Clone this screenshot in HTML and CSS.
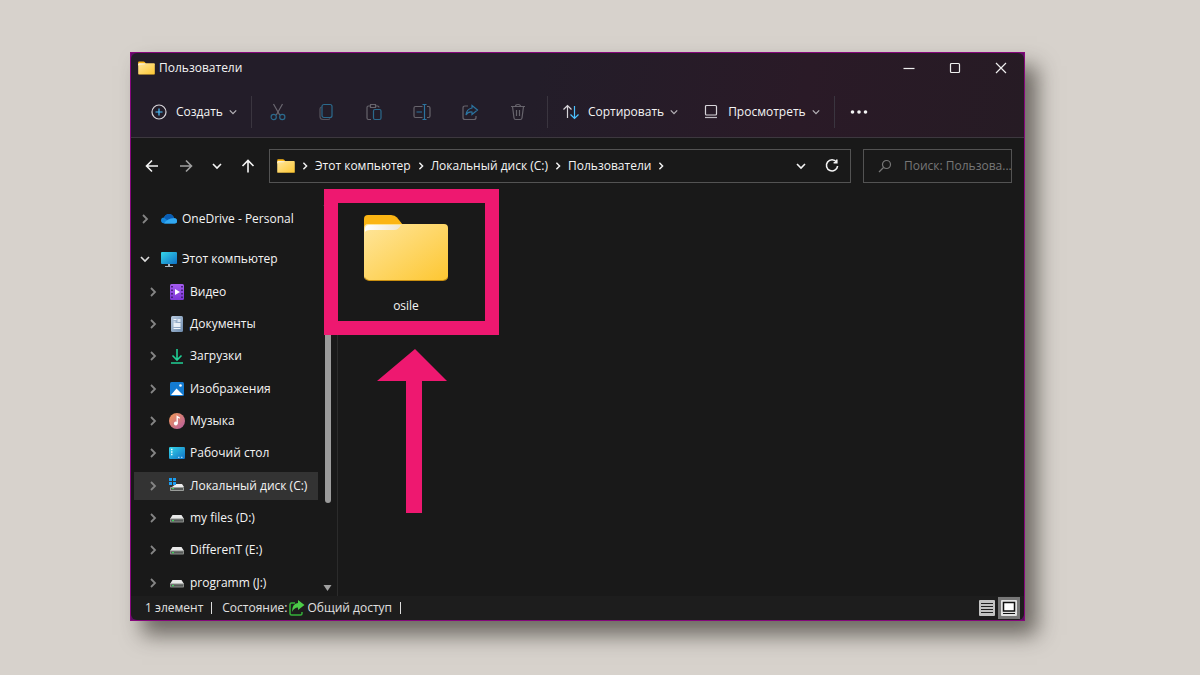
FILE: index.html
```html
<!DOCTYPE html>
<html lang="ru">
<head>
<meta charset="utf-8">
<meta name="viewport" content="width=device-width, initial-scale=1">
<title>Пользователи</title>
<link rel="stylesheet" href="styles.css">
</head>
<body>
<svg class="defs" aria-hidden="true">
  <defs>
    <linearGradient id="g-folder" x1="0" y1="0" x2="1" y2="1"><stop offset="0" stop-color="#ffe69c"/><stop offset="1" stop-color="#fdc732"/></linearGradient>
    <linearGradient id="g-shine" x1="0" y1="0" x2="1" y2="0"><stop offset="0" stop-color="#fff"/><stop offset="1" stop-color="#efe6d0"/></linearGradient>
    <linearGradient id="g-screen" x1="0" y1="0" x2="1" y2="1"><stop offset="0" stop-color="#35d6e8"/><stop offset="1" stop-color="#0f6fc4"/></linearGradient>
    <linearGradient id="g-doc" x1="0" y1="0" x2="1" y2="1"><stop offset="0" stop-color="#b9cbe0"/><stop offset="1" stop-color="#6d8bad"/></linearGradient>
    <linearGradient id="g-music" x1="0" y1="0" x2="1" y2="1"><stop offset="0" stop-color="#f39a55"/><stop offset="1" stop-color="#b45aa0"/></linearGradient>
    <linearGradient id="g-video" x1="0" y1="0" x2="0" y2="1"><stop offset="0" stop-color="#a55cf0"/><stop offset="1" stop-color="#7c35d6"/></linearGradient>
  </defs>
  <symbol id="chev-r" viewBox="0 0 10 10"><path d="M3 1l4 4-4 4" fill="none" stroke="currentColor" stroke-width="1.8"/></symbol>
  <symbol id="chev-d" viewBox="0 0 10 10"><path d="M1 3l4 4 4-4" fill="none" stroke="currentColor" stroke-width="1.6"/></symbol>
  <symbol id="folder" viewBox="0 0 86 67"><path d="M1 5q0-4 4-4h23q4 0 6 2.500l6 7.500v12H1z" fill="#fbb514"/><path d="M1 15q0-5 4-5h76q4 0 4 4v48q0 4-4 4H5q-4 0-4-4z" fill="url(#g-folder)"/><path d="M2 18v-3q0-4 4-4h32q-2.500 5-7 5H7q-4 0-5 2z" fill="url(#g-shine)"/><path d="M2 63.500q1 3 4 3h74q4 0 4.500-3" fill="none" stroke="#c98f10"/></symbol>
  <symbol id="drive" viewBox="0 0 16 16"><path d="M3.500 5h9l2.500 4H1z" fill="#e9e9e9"/><rect x="1" y="8.500" width="14" height="4" rx=".8" fill="#8a8d8a"/><rect x="2" y="9.500" width="12" height="2" fill="#565a58"/><rect x="3" y="10" width="2" height="1.200" fill="#3fd05a"/></symbol>
</svg>

<main class="window">
  <header class="chrome">
    <div class="titlebar">
      <svg class="i-title"><use href="#folder"/></svg>
      <h1 class="title">Пользователи</h1>
      <div class="captions">
        <button class="caption" aria-label="Свернуть"><svg viewBox="0 0 12 12"><path d="M.5 6.500h11"/></svg></button>
        <button class="caption" aria-label="Развернуть"><svg viewBox="0 0 12 12"><rect x="1.500" y="1.500" width="9" height="9" rx="1"/></svg></button>
        <button class="caption" aria-label="Закрыть"><svg viewBox="0 0 12 12"><path d="M1 1l10 10M11 1L1 11"/></svg></button>
      </div>
    </div>
    <div class="toolbar">
      <button class="tool tool-new">
        <svg viewBox="0 0 18 18"><circle cx="9" cy="9" r="7" stroke="#d8d5da"/><path d="M9 5.500v7M5.500 9h7" stroke="#4cc2ff"/></svg>
        Создать <svg class="chev"><use href="#chev-d"/></svg>
      </button>
      <span class="sep"></span>
      <div class="actions">
        <button class="act" aria-label="Вырезать"><svg viewBox="0 0 18 18"><path d="M4.500 1l6.200 11M13.500 1L7.300 12" stroke="#6a6770"/><g stroke="#2b6a8d"><circle cx="4.700" cy="14" r="2.600"/><circle cx="13.300" cy="14" r="2.600"/></g></svg></button>
        <button class="act" aria-label="Копировать"><svg viewBox="0 0 18 18"><path d="M4.500 4Q3 4.500 3 6v7.500Q3 16.500 6 16.500h5q1.500 0 2-1" stroke="#56535c"/><rect x="5" y="1.500" width="10" height="13" rx="2" stroke="#2b6a8d"/></svg></button>
        <button class="act" aria-label="Вставить"><svg viewBox="0 0 18 18"><path d="M6 16.500H3.500Q2 16.500 2 15V4.500Q2 3 3.500 3H5m6 0h1.500Q14 3 14 4.500M5.500 1.500h5v3h-5z" stroke="#67646c"/><rect x="8.500" y="6.500" width="7.500" height="10" rx="1.500" stroke="#2b6a8d"/></svg></button>
        <button class="act" aria-label="Переименовать"><svg viewBox="0 0 18 18"><path d="M9.500 3.500h-7Q1 3.500 1 5v8q0 1.500 1.500 1.500h7M14 3.500h1.500Q17 3.500 17 5v8q0 1.500-1.500 1.500H14" stroke="#67646c"/><path d="M9.500 1.500h4M9.500 16.500h4M11.500 1.500v15M3.500 9H9" stroke="#2b74a0"/></svg></button>
        <button class="act" aria-label="Поделиться"><svg viewBox="0 0 18 18"><path d="M7 3H4Q2 3 2 5v9.500q0 2 2 2h9q2 0 2-2V13" stroke="#67646c"/><path d="M11 2.500l5.500 4.500L11 11.500V9Q7 8.500 5 12q.5-6 6-7z" stroke="#2b74a0"/></svg></button>
        <button class="act" aria-label="Удалить"><svg viewBox="0 0 18 18"><path d="M2 3.500h14M6.500 3.500Q6.500 1.500 9 1.500t2.500 2M3.500 3.500L5 15q.2 1.500 1.700 1.500h4.600q1.500 0 1.700-1.500l1.500-11.500M7.500 7v6M10.500 7v6" stroke="#67646c"/></svg></button>
      </div>
      <span class="sep"></span>
      <button class="tool tool-sort">
        <svg viewBox="0 0 18 18"><path d="M5.500 15V2.500M1.500 6.500l4-4 4 4" stroke="#d8d5da"/><path d="M12.500 3v12.500M8.500 11.500l4 4 4-4" stroke="#4cc2ff"/></svg>
        Сортировать <svg class="chev"><use href="#chev-d"/></svg>
      </button>
      <button class="tool tool-view">
        <svg viewBox="0 0 18 18"><rect x="3.500" y="2.500" width="11" height="9.500" rx="1" stroke="#d8d5da"/><path d="M3 14.500h12" stroke="#bdbac0"/></svg>
        Просмотреть <svg class="chev"><use href="#chev-d"/></svg>
      </button>
      <span class="sep"></span>
      <button class="more" aria-label="Дополнительно"><svg viewBox="0 0 18 6"><circle cx="2.500" cy="3" r="1.800"/><circle cx="9" cy="3" r="1.800"/><circle cx="15.500" cy="3" r="1.800"/></svg></button>
    </div>
  </header>

  <nav class="navbar" aria-label="Адрес">
    <div class="history">
      <button class="nav" aria-label="Назад"><svg viewBox="0 0 16 16"><path d="M14 8H2.500M8 2.500L2.500 8 8 13.500"/></svg></button>
      <button class="nav dim" aria-label="Вперёд"><svg viewBox="0 0 16 16"><path d="M2 8h11.500M8 2.500L13.500 8 8 13.500"/></svg></button>
      <button class="nav" aria-label="Последние"><svg class="chev"><use href="#chev-d"/></svg></button>
      <button class="nav" aria-label="Вверх"><svg viewBox="0 0 16 16"><path d="M8 14.500V3M2.500 8L8 2.500 13.500 8"/></svg></button>
    </div>
    <div class="address">
      <svg class="i-addr"><use href="#folder"/></svg>
      <svg class="crumb-sep"><use href="#chev-r"/></svg>
      <a class="crumb" href="#pc">Этот компьютер</a>
      <svg class="crumb-sep"><use href="#chev-r"/></svg>
      <a class="crumb" href="#c">Локальный диск (C:)</a>
      <svg class="crumb-sep"><use href="#chev-r"/></svg>
      <a class="crumb" href="#users">Пользователи</a>
      <svg class="crumb-sep"><use href="#chev-r"/></svg>
      <button class="nav push" aria-label="История"><svg class="chev"><use href="#chev-d"/></svg></button>
      <button class="nav" aria-label="Обновить"><svg viewBox="0 0 16 16"><path d="M12.500 4A5.600 5.600 0 1 0 13.600 8M12.800 1.500v3.200H9.600"/></svg></button>
    </div>
    <label class="search">
      <svg viewBox="0 0 16 16"><circle cx="9.500" cy="6.500" r="4"/><path d="M6.500 9.500L2 14"/></svg>
      <input class="search-box" type="text" aria-label="Поиск" placeholder="Поиск: Пользова...">
    </label>
  </nav>

  <div class="body">
    <aside class="sidebar">
      <div class="tree">
        <a class="row top" href="#od"><svg class="twist"><use href="#chev-r"/></svg><svg class="ico" viewBox="0 0 16 16"><path d="M4 12.500Q0 12.500 0 9.500T3 6.500Q4.500 3 8 3t5 4q3 0 3 3 0 2.500-2.500 2.500z" fill="#1587dc"/><path d="M3 6.500Q4.500 3 8 3t5 4L7 10z" fill="#0a5db4"/><path d="M3 12.300Q7 7 13 7.200q3 .3 3 2.800 0 2.500-2.500 2.500H4z" fill="#32a9f2"/></svg>OneDrive - Personal</a>
        <div class="group">
          <a class="row top" href="#pc"><svg class="twist open"><use href="#chev-d"/></svg><svg class="ico" viewBox="0 0 16 16"><rect x="0" y="1" width="16" height="12" rx="1" fill="url(#g-screen)"/><path d="M7 13h2v2h3v1H4v-1h3z" fill="#a8b4bd"/></svg>Этот компьютер</a>
          <a class="row" href="#v"><svg class="twist"><use href="#chev-r"/></svg><svg class="ico" viewBox="0 0 16 16"><rect x="1" y="0" width="14" height="16" rx="1.500" fill="url(#g-video)"/><path d="M6 5v6l5-3z" fill="#fff"/><path d="M3 2v12M13 2v12" stroke="#33185f" stroke-width="1.500" stroke-dasharray="1.500 2"/></svg>Видео</a>
          <a class="row" href="#d"><svg class="twist"><use href="#chev-r"/></svg><svg class="ico" viewBox="0 0 16 16"><rect x="2" y="0" width="12" height="16" rx="1.500" fill="url(#g-doc)"/><path d="M4.500 3.500h3M4.500 6h2M4.500 12.500h7" stroke="#f2f7fc"/><rect x="4.500" y="7" width="7" height="4" fill="#e8eff7"/><rect x="8.500" y="3" width="3" height="3" fill="#dce7f3"/></svg>Документы</a>
          <a class="row" href="#l"><svg class="twist"><use href="#chev-r"/></svg><svg class="ico" viewBox="0 0 16 16"><path d="M8 1v10.500M3.500 7.500L8 12l4.500-4.500M2 15h12" fill="none" stroke="#20cf95" stroke-width="1.600"/></svg>Загрузки</a>
          <a class="row" href="#i"><svg class="twist"><use href="#chev-r"/></svg><svg class="ico" viewBox="0 0 16 16"><rect x="1" y="1" width="14" height="14" rx="1.500" fill="#147bd1"/><path d="M2 14l5.500-6.500L14 14z" fill="#fff"/><circle cx="11.500" cy="4.500" r="1.300" fill="#fff"/></svg>Изображения</a>
          <a class="row" href="#m"><svg class="twist"><use href="#chev-r"/></svg><svg class="ico" viewBox="0 0 16 16"><circle cx="8" cy="8" r="8" fill="url(#g-music)"/><circle cx="6.800" cy="10.500" r="1.900" fill="#fff"/><path d="M8.200 10.500V3.500l2.600 1.700" fill="none" stroke="#fff" stroke-width="1.300"/></svg>Музыка</a>
          <a class="row" href="#r"><svg class="twist"><use href="#chev-r"/></svg><svg class="ico" viewBox="0 0 16 16"><rect x="0" y="2" width="16" height="12" rx="1.200" fill="url(#g-screen)"/><path d="M2 4.500h1.500M2 7h1.500M2 9.500h1.500" stroke="#e8fbff" stroke-width="1.300"/><path d="M9 12.300h1.500M12 12.300h1.500" stroke="#bfe8ff"/></svg>Рабочий стол</a>
          <a class="row current" href="#c"><svg class="twist"><use href="#chev-r"/></svg><svg class="ico" viewBox="0 0 16 16"><path d="M7 6h6l2 3H3z" fill="#eee"/><rect x="1" y="9" width="14" height="4" rx=".8" fill="#9a9d9a"/><rect x="2" y="10" width="12" height="2" fill="#565a58"/><path d="M3 10.500h2" stroke="#3fd05a"/><path d="M0 0h3v3H0zM4 0h3v3H4zM0 4h3v3H0zM4 4h3v3H4z" fill="#1b9df0"/></svg>Локальный диск (C:)</a>
          <a class="row" href="#dd"><svg class="twist"><use href="#chev-r"/></svg><svg class="ico"><use href="#drive"/></svg>my files (D:)</a>
          <a class="row" href="#e"><svg class="twist"><use href="#chev-r"/></svg><svg class="ico"><use href="#drive"/></svg>DifferenT (E:)</a>
          <a class="row" href="#j"><svg class="twist"><use href="#chev-r"/></svg><svg class="ico"><use href="#drive"/></svg>programm (J:)</a>
        </div>
      </div>
      <div class="scroll">
        <svg viewBox="0 0 8 8"><path d="M0 7l4-6 4 6z"/></svg>
        <span class="track"><span class="thumb"></span></span>
        <svg viewBox="0 0 8 8"><path d="M0 1h8L4 7z"/></svg>
      </div>
    </aside>
    <section class="content">
      <a class="file" href="#osile"><svg class="i-big"><use href="#folder"/></svg>osile</a>
      <div class="frame"></div>
      <svg class="arrow" viewBox="0 0 70 164"><path d="M38 0l32 32H45v132H29V32H0z" fill="#ee1870"/></svg>
    </section>
  </div>

  <footer class="status">
    <span>1 элемент</span><span class="bar"></span>
    <span class="state">Состояние:<svg viewBox="0 0 16 16"><path d="M6 3H2.500Q1 3 1 4.500v9Q1 15 2.500 15h9q1.500 0 1.500-1.500V12" fill="none" stroke="#35b13a" stroke-width="1.500"/><path d="M9 0l6.500 5L9 10V7.500Q5 7.500 3 12 3 3.500 9 3z" fill="#4ccb48"/></svg>Общий доступ</span><span class="bar"></span>
    <button class="mode push" aria-label="Таблица"><svg viewBox="0 0 16 16"><rect width="16" height="16" rx="1" fill="#c3c3c3"/><path d="M2 3.500h12M2 6.500h12M2 9.500h12M2 12.500h12" stroke="#222"/></svg></button>
    <button class="mode on" aria-label="Эскизы"><svg viewBox="0 0 16 16"><rect width="16" height="16" rx="1" fill="#e2e2e2"/><rect x="2.500" y="2.500" width="11" height="8.500" fill="#fff" stroke="#111" stroke-width="1.500"/><path d="M2 13.500h12" stroke="#111"/></svg></button>
  </footer>
</main>
</body>
</html>
```
FILE: styles.css
```css
* { box-sizing: border-box; }

body {
  margin: 0;
  min-height: 100vh;
  display: flex;
  padding: 52px 175px 54px 130px;
  background: #d7d2cc;
  color: #f4f4f4;
  font: 12px/16px "Open Sans", "Noto Sans", sans-serif;
}

.defs { position: absolute; width: 0; height: 0; }
svg { display: block; flex: none; }
a { color: inherit; text-decoration: none; }

button {
  display: flex;
  align-items: center;
  justify-content: center;
  padding: 0;
  border: 0;
  background: none;
  color: inherit;
  font: inherit;
}

.push { margin-left: auto; }

.window {
  flex: 1;
  min-width: 0;
  display: flex;
  flex-direction: column;
  border: 1px solid #86067c;
  background: #5c1063;
  box-shadow: 12px 14px 20px rgba(50, 46, 40, .65);
}

.chrome {
  border-radius: 6px 6px 0 0;
  background: linear-gradient(100deg, #231d29 45%, #2a1a27 75%, #261b24);
  border-bottom: 1px solid #3d383f;
}

.titlebar { display: flex; align-items: center; gap: 4px; height: 30px; padding-left: 7px; }
.i-title { width: 17px; height: 14px; }
.title { margin: 0; font-size: 12px; font-weight: 400; }
.captions { display: flex; margin-left: auto; }
.caption { width: 46px; height: 28px; }
.caption svg { width: 12px; height: 12px; fill: none; stroke: #eee; stroke-width: 1.2; }

.toolbar { display: flex; align-items: center; height: 54px; padding: 3px 0 0 19px; font-weight: 500; }
.tool { gap: 8px; }
.tool svg, .act svg { width: 18px; height: 18px; fill: none; stroke-width: 1.2; }
.tool svg.chev { width: 8px; height: 8px; margin-left: -2px; color: #b5b2b7; }
.tool-new { margin-right: 14px; }
.tool-sort { margin-left: 14px; }
.tool-view { margin: 0 14px 0 24px; }
.sep { width: 1px; height: 32px; background: #3a353f; }
.actions { display: flex; gap: 30px; margin: 0 20px 0 17px; }
.more { margin-left: 15px; }
.more svg { width: 18px; height: 6px; fill: #f4f4f4; }

.navbar { display: flex; align-items: center; height: 55px; padding: 0 12px 0 13px; background: #191919; }
.history { display: flex; align-items: center; gap: 18px; width: 125px; }
.nav svg { width: 16px; height: 16px; fill: none; stroke: currentColor; stroke-width: 1.6; }
.nav svg.chev { width: 10px; height: 10px; }
.nav.dim { color: #a0a0a0; }
.address, .search { display: flex; align-items: center; height: 34px; border: 1px solid #535353; }
.address { flex: 1; min-width: 0; padding: 0 10px 0 7px; gap: 6px; white-space: nowrap; }
.i-addr { width: 18px; height: 14px; }
.crumb-sep { width: 8px; height: 8px; }
.address .nav + .nav { margin-left: 12px; }
.search { width: 149px; margin-left: 12px; padding: 0 0 0 13px; gap: 11px; }
.search svg { width: 16px; height: 16px; fill: none; stroke: #777; stroke-width: 1.2; }
.search-box {
  flex: 1;
  min-width: 0;
  padding: 0;
  border: 0;
  outline: 0;
  background: none;
  color: #ddd;
  font: inherit;
}
.search-box::placeholder { color: #777; opacity: 1; }

.body { flex: 1; display: flex; min-height: 0; background: #191919; }
.sidebar { display: flex; width: 207px; border-right: 1px solid #2b2b2b; }
.tree { flex: 1; display: flex; flex-direction: column; gap: 8px; padding: 10px 0 0 3px; }
.group { flex: 1; display: flex; flex-direction: column; margin-bottom: -3px; }
.row { flex: 1 0 28px; display: flex; align-items: center; padding-left: 14px; white-space: nowrap; }
.tree > .row { flex: 0 0 32px; }
.row.top { padding-left: 6px; }
.twist { width: 10px; height: 10px; margin-right: 11px; color: #858585; }
.twist.open { color: #ddd; }
.ico { width: 16px; height: 16px; margin-right: 5px; }
.current { background: linear-gradient(#333, #333) center / 100% 28px no-repeat; }
.scroll {
  display: flex;
  flex-direction: column;
  align-items: center;
  gap: 4px;
  width: 19px;
  padding: 6px 0 4px;
}
.scroll svg { width: 9px; height: 8px; fill: #a0a0a0; }
.track { flex: 1; width: 6px; }
.thumb { display: block; height: 79%; border-radius: 3px; background: #9b9b9b; }

.content { flex: 1; position: relative; padding: 21px 0 0 25px; }
.file { display: flex; flex-direction: column; align-items: center; gap: 17px; width: 86px; }
.i-big { width: 86px; height: 67px; }

/* Callout drawn over the folder view */
.frame {
  position: absolute;
  left: -14px;
  top: -4px;
  width: 175px;
  height: 146px;
  border: 14px solid #ee1870;
}
.arrow { position: absolute; left: 39px; top: 156px; width: 70px; height: 164px; }

.status {
  display: flex;
  align-items: center;
  height: 24px;
  padding-left: 14px;
  border-radius: 0 0 6px 6px;
  background: #1d1d1d;
  color: #e0e0e0;
}
.bar { width: 1px; height: 12px; margin: 0 10px 0 8px; background: #ddd; }
.state { display: flex; align-items: center; gap: 2px; }
.state svg { width: 16px; height: 16px; }
.mode { width: 22px; height: 22px; }
.mode svg { width: 16px; height: 16px; }
.mode.on { margin-right: 4px; background: #777; }
```
